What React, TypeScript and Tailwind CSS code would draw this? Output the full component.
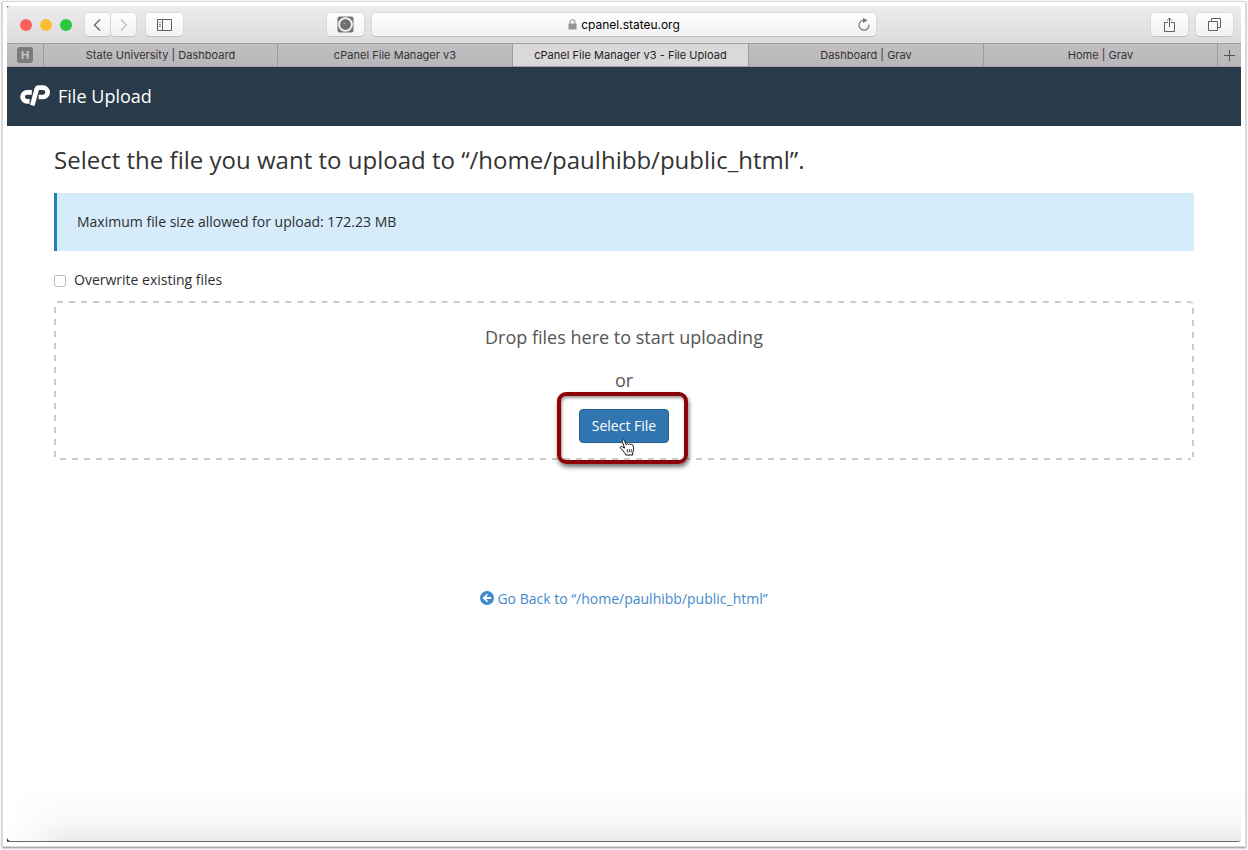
import React from "react";

const toolButton =
  "flex h-[23px] items-center justify-center rounded-[4px] bg-linear-to-b from-white to-[#f3f2f3] shadow-[0_0_0_0.5px_#cfcdcf,0_1px_0.5px_#b4b2b4]";

function Toolbar() {
  return (
    <div className="flex h-[37px] shrink-0 items-center bg-linear-to-b from-[#eeecee] to-[#dddadd] pl-[13px] pr-[8px]">
      <div className="flex gap-[8px]">
        <span className="size-[12px] rounded-full bg-[#fc605b]" />
        <span className="size-[12px] rounded-full bg-[#fdbc31]" />
        <span className="size-[12px] rounded-full bg-[#29c940]" />
      </div>
      <div className="ml-[13px] flex gap-px">
        <button className={toolButton + " w-[25px]"}>
          <svg width="9" height="14" viewBox="0 0 9 14" fill="none" stroke="#6b6b6b" strokeWidth="1.4">
            <path d="M7 1.5 1.5 7 7 12.5" />
          </svg>
        </button>
        <button className={toolButton + " w-[25px]"}>
          <svg width="9" height="14" viewBox="0 0 9 14" fill="none" stroke="#bdbcbd" strokeWidth="1.4">
            <path d="M2 1.5 7.5 7 2 12.5" />
          </svg>
        </button>
      </div>
      <button className={toolButton + " ml-[10px] w-[37px]"}>
        <svg width="15" height="12" viewBox="0 0 15 12" fill="none" stroke="#5c5c5c">
          <path d="M.5.5h14v11H.5zM5.5.5v11" />
          <path d="M2 3.5h2M2 5.5h2M2 7.5h2" stroke="#888" />
        </svg>
      </button>
      <button className={toolButton + " ml-[144px] w-[37px]"}>
        <svg width="17" height="17" viewBox="0 0 17 17">
          <rect x=".5" y=".5" width="16" height="16" rx="2" fill="#747474" />
          <circle cx="8.5" cy="8.5" r="6.4" fill="none" stroke="#f3f3f3" strokeWidth="1.9" />
          <circle cx="8.5" cy="8.5" r="4.3" fill="#6e6e6e" />
          <circle cx="7.3" cy="7.4" r=".9" fill="#aaa" />
          <circle cx="9.2" cy="8.8" r=".6" fill="#888" />
        </svg>
      </button>
      <div className={toolButton + " relative ml-[8px] w-[504px] text-[12px] text-black"}>
        <div className="mt-px flex items-center gap-[4px]">
          <svg className="mb-px" width="9" height="11" viewBox="0 0 9 11">
            <path d="M2 5V3.200a2.500 2.500 0 0 1 5 0V5" fill="none" stroke="#999" strokeWidth="1.100" />
            <rect x=".5" y="4.500" width="8" height="6" rx=".6" fill="#959595" />
          </svg>
          <span className="tracking-[-0.02px]">cpanel.stateu.org</span>
        </div>
        <svg className="absolute right-[5px] top-[4px]" width="14" height="15" viewBox="0 0 14 15">
          <path d="M6.500 3.200A5 5 0 1 0 12 7.700" fill="none" stroke="#777" strokeWidth="1.200" />
          <path d="M6 .7 10.500 3.300 6 5.900z" fill="#777" />
        </svg>
      </div>
      <button className={toolButton + " ml-auto w-[37px]"}>
        <svg width="12" height="16" viewBox="0 0 12 16" fill="none" stroke="#606060">
          <path d="M4 5.500H.5v9h10v-9H7M5.500 10V1M3 3.500 5.500 1 8 3.500" />
        </svg>
      </button>
      <button className={toolButton + " ml-[8px] w-[37px]"}>
        <svg width="13" height="13" viewBox="0 0 13 13" fill="none" stroke="#606060">
          <path d="M.5 3.500h9v9h-9zM3.500 3.500v-3h9v9h-3" />
        </svg>
      </button>
    </div>
  );
}

function Tab({ label, active = false, className }: { label: string; active?: boolean; className: string }) {
  return (
    <div
      className={
        "flex items-center justify-center border-r border-[#9c9a9c] " +
        (active ? "bg-[#dad8da] text-[#222] " : "text-[#333] ") +
        className
      }
    >
      {label}
    </div>
  );
}

function Tabs() {
  return (
    <div className="flex h-[24px] shrink-0 border-y border-[#a19fa1] bg-linear-to-b from-[#c1bfc1] to-[#b9b7b9] text-[11px] tracking-[0.03px]">
      <div className="flex w-[37px] items-center justify-center border-r border-[#9c9a9c]">
        <span className="flex size-[16px] items-center justify-center rounded-[3px] bg-[#7d7c7d] text-[11px] font-bold text-[#c8c7c8]">
          H
        </span>
      </div>
      <Tab label="State University | Dashboard" className="w-[234px]" />
      <Tab label="cPanel File Manager v3" className="w-[235px]" />
      <Tab label="cPanel File Manager v3 - File Upload" active className="w-[236px]" />
      <Tab label="Dashboard | Grav" className="w-[235px]" />
      <Tab label="Home | Grav" className="w-[234px]" />
      <div className="flex flex-1 items-center justify-center">
        <svg width="11" height="11" viewBox="0 0 11 11" stroke="#555">
          <path d="M5.500 0v11M0 5.500h11" />
        </svg>
      </div>
    </div>
  );
}

function CpLogo() {
  return (
    <svg className="mb-[2px]" width="30" height="21" viewBox="0 0 30 21" fill="none" stroke="#fff" strokeWidth="4.700">
      <path d="M11.800 7.300H7.100a4.550 4.550 0 0 0 0 9.100h2.500" />
      <path d="M12.300 20.400 16.700 4.200Q17.200 2.700 18.700 2.700H23a4.500 4.500 0 0 1 0 9.300h-4.400" />
    </svg>
  );
}

function HandCursor() {
  return (
    <svg
      className="absolute left-[40px] top-[29px]"
      width="17"
      height="19"
      viewBox="0 0 17 19"
      fill="#fff"
      stroke="#111"
      strokeLinejoin="round"
      strokeLinecap="round"
    >
      <path d="M5.500 9.800 3.300 3.600C2.700 1.800 4.700 1.100 5.500 2.700L7.200 6.800c.1-1.200 1.800-1.400 2.300-.3.500-1 1.900-.8 2.300.3.600-.8 1.900-.5 2.200.6.9 2.700.8 5.300-.4 7.400V17H6.800C6.200 15.200 4.400 13.300 3.300 11.900L1.400 10.200C.7 9.200 1.900 8 3.200 8.700z" />
      <path d="M8.300 11.500v2.500M10.300 11.500v2.500M12.200 11.500v2.500" strokeWidth=".8" />
    </svg>
  );
}

function DashedOutline() {
  return (
    <svg
      className="pointer-events-none absolute inset-0"
      width="1140"
      height="159"
      viewBox="0 0 1140 159"
      fill="none"
      stroke="#ccc"
      strokeWidth="2"
      strokeDasharray="6 6"
    >
      <path d="M3 1H1136" strokeDasharray="6 6.02" />
      <path d="M1136 1Q1138 1 1138.500 2.500" strokeDasharray="none" strokeWidth="1.500" />
      <path d="M1139 7V156" />
      <path d="M6 158H1137" />
      <path d="M1 6V156" />
    </svg>
  );
}

function UploadPage() {
  return (
    <main className="flex flex-1 flex-col bg-[linear-gradient(to_right,white,transparent_60px),linear-gradient(to_bottom,white_92%,#f8f8f8_97%,#ececec)] px-[47px] text-[14px] text-[#2a2e30]">
      <h1 className="mt-[17px] h-[34px] whitespace-nowrap text-[24px] leading-[34px] tracking-[0.01px] text-[#333]">
        Select the file you want to upload to “/home/paulhibb/public_html”.
      </h1>
      <div className="mt-[16px] flex h-[58px] items-center border-l-3 border-[#2480b8] bg-[#d7ecfa] pb-[2px] pl-[20px]">
        Maximum file size allowed for upload: 172.23 MB
      </div>
      <label className="mt-[18px] flex h-[20px] items-center gap-[8px]">
        <input
          type="checkbox"
          className="mt-[3px] size-[12px] appearance-none rounded-[2px] border border-[#bdbdbd] bg-white"
        />
        <span>Overwrite existing files</span>
      </label>
      <section className="relative mt-[12px] flex h-[159px] flex-col items-center pt-[2px] text-[18px] text-[#555]">
        <DashedOutline />
        <p className="mt-[21px] leading-[26px]">Drop files here to start uploading</p>
        <p className="mt-[17px] leading-[26px]">or</p>
        <div className="relative mt-[16px]">
          <button className="block h-[34px] w-[90px] rounded-[4px] border border-[#28608f] bg-[#3276b1] pb-[2px] text-[14px] text-white">
            Select File
          </button>
          <div className="absolute left-[-22px] top-[-17px] h-[72px] w-[131px] rounded-[9px] border-4 border-[#8b0304] shadow-[1px_3px_4px_rgba(0,0,0,0.55),inset_1px_2px_3px_rgba(0,0,0,0.4)]" />
          <HandCursor />
        </div>
      </section>
      <a className="mt-[128px] flex h-[20px] items-center justify-center gap-[3px] text-[#428bca]">
        <svg width="14" height="14" viewBox="0 0 14 14">
          <circle cx="7" cy="7" r="7" fill="#428bca" />
          <path d="M2.500 7 7 2.700 8 3.800 6 5.900h5.200v2.200H6l2 2.100-1 1.100z" fill="#fff" />
        </svg>
        <span>Go Back to “/home/paulhibb/public_html”</span>
      </a>
    </main>
  );
}

export default function App() {
  return (
    <div className="h-[850px] w-[1248px] overflow-hidden bg-white pl-[2px] pt-px">
      <div className="h-[846px] w-[1244px] border border-[#d8d8d8] bg-white pl-[4px] pt-[4px] shadow-[0_1px_2px_#888]">
        <div className="relative flex h-[836px] w-[1234px] flex-col overflow-hidden rounded-tr-[4px] rounded-br-[4px] border-b border-[#666] bg-white font-['Inter',sans-serif]">
          <Toolbar />
          <Tabs />
          <div className="flex flex-1 flex-col font-['Open_Sans',sans-serif]">
            <header className="flex h-[59px] items-center gap-[8px] bg-[#293a4a] pl-[13px] text-[18px] text-white">
              <CpLogo />
              <span className="tracking-[0.02px]">File Upload</span>
            </header>
            <UploadPage />
          </div>
          <svg className="absolute bottom-0 left-0" width="4" height="4" viewBox="0 0 4 4">
            <path d="M0 0Q0 4 4 4H0z" fill="#111" />
          </svg>
          <svg className="absolute left-0 top-0" width="3" height="3" viewBox="0 0 3 3">
            <path d="M0 3Q0 0 3 0H0z" fill="#6b4a4a" />
          </svg>
        </div>
      </div>
    </div>
  );
}
